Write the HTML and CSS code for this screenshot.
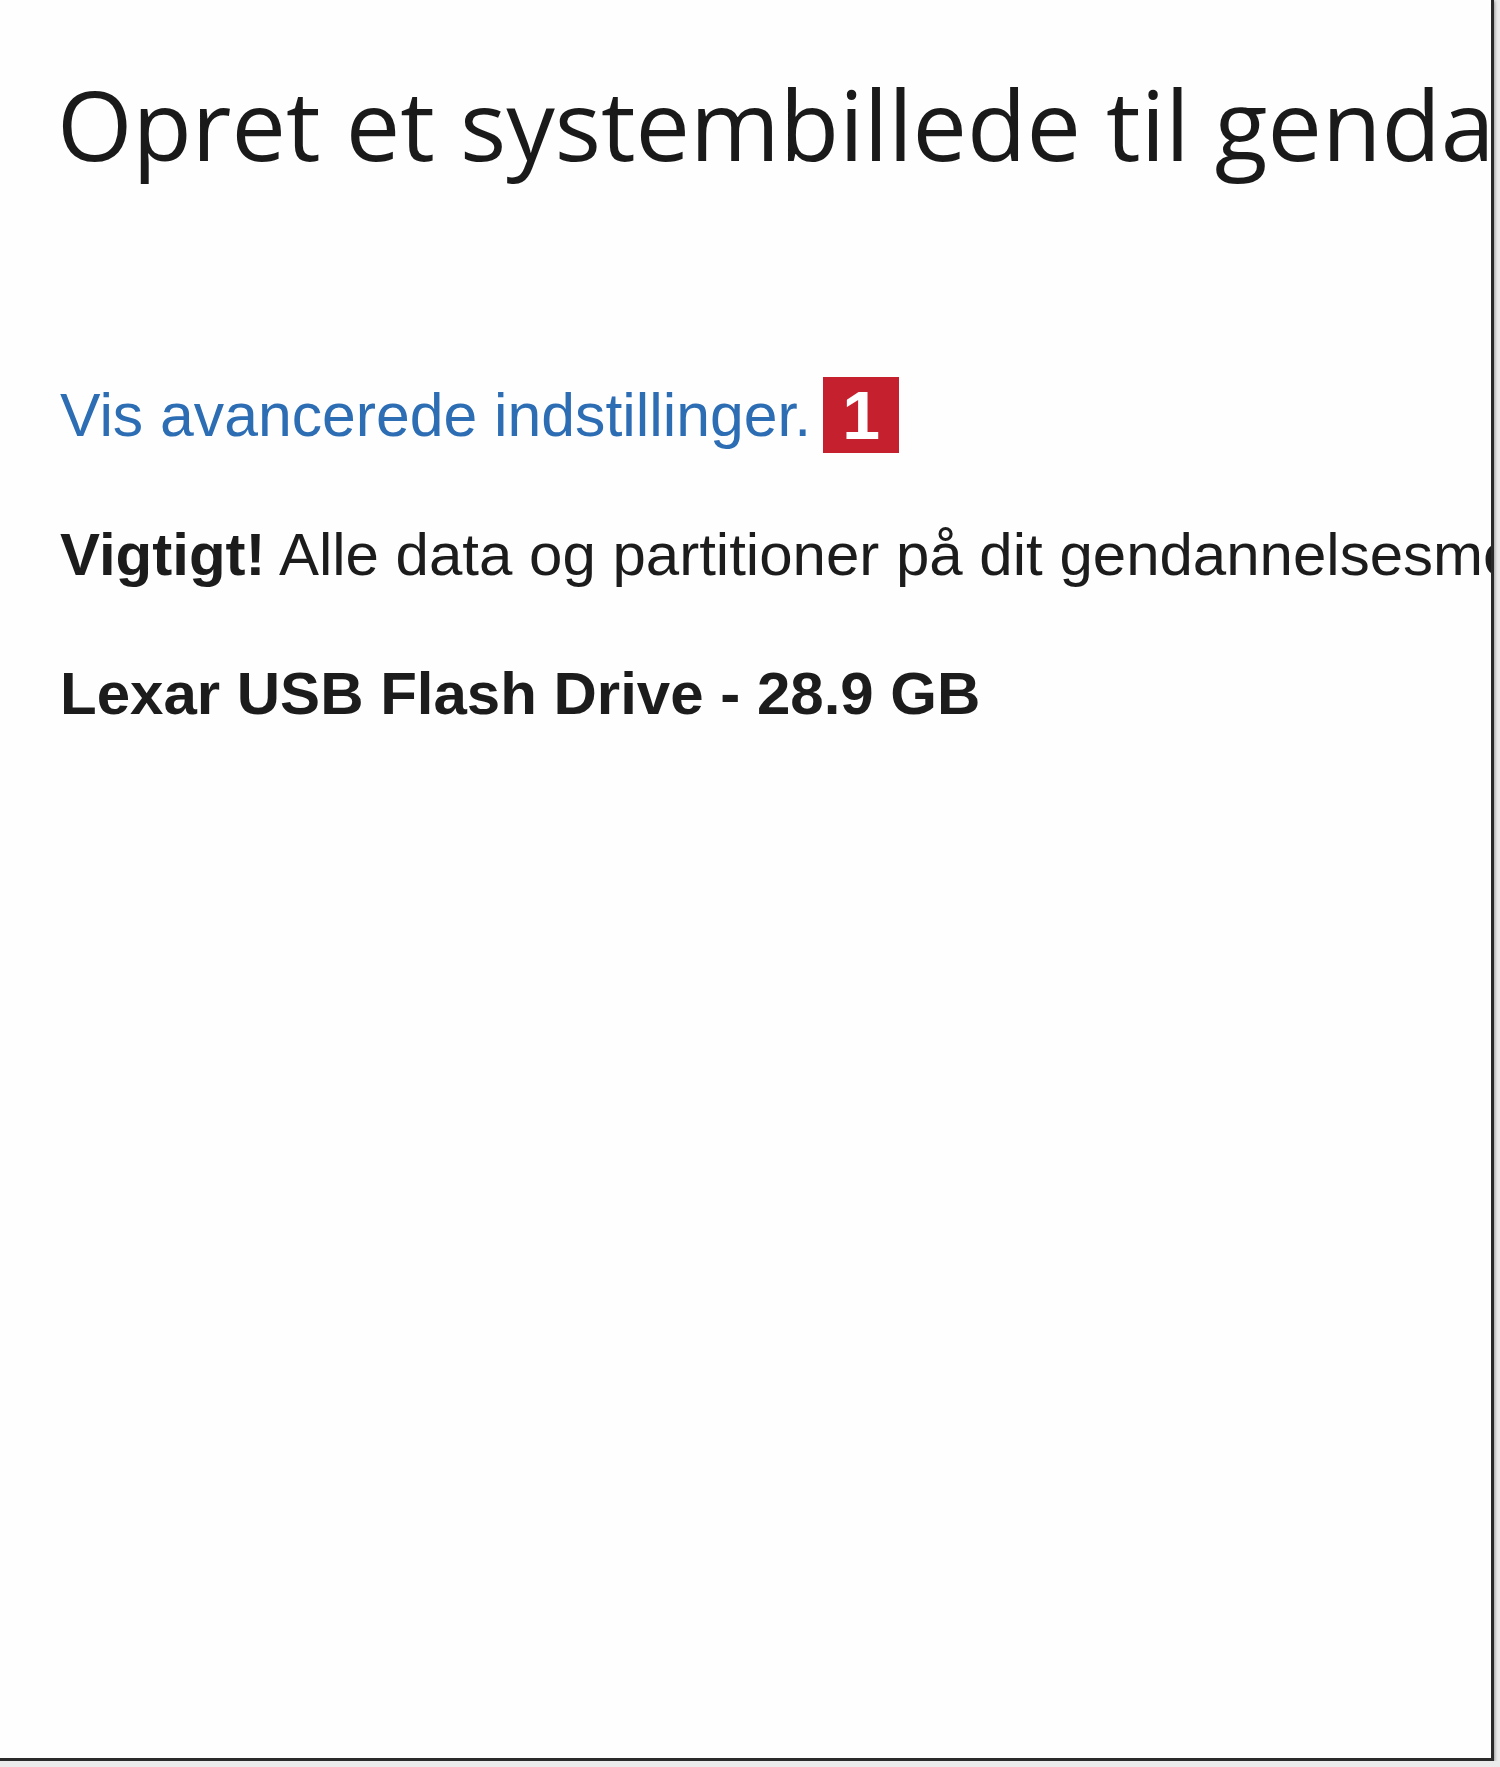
FILE: index.html
```html
<!DOCTYPE html>
<html lang="da">
<head>
<meta charset="UTF-8" />
<meta name="viewport" content="width=device-width, initial-scale=1.0"/>
<title>Opret et systembillede</title>
<link rel="stylesheet" href="styles.css">
</head>
<body>
<div class="wizard">
    <h1 class="title">Opret et systembillede til gendannelsesdrevet</h1>

    <div class="advanced">
        <a href="#" class="link">Vis avancerede indstillinger.</a>
        <span class="badge">1</span>
    </div>

    <p class="warning"><b>Vigtigt!</b> Alle data og partitioner på dit gendannelsesmedie vil blive slettet.</p>

    <p class="drive">Lexar USB Flash Drive - 28.9 GB</p>
</div>
</body>
</html>
```

FILE: styles.css
```css
body {
    margin: 0;
    background: #ebebeb;
    font-family: "Liberation Sans", Arial, sans-serif;
    color: #1c1c1c;
}

.wizard {
    box-sizing: border-box;
    width: 1494px;
    height: 1761px;
    background: #fefefe;
    border-right: 3px solid #2a2a2a;
    border-bottom: 3px solid #2a2a2a;
    box-shadow: 1px 1px 3px rgba(0, 0, 0, 0.35);
    padding: 68px 0 0 60px;
    overflow: hidden;
    white-space: nowrap;
}

.title {
    margin: 0;
    font-family: "Open Sans", "Liberation Sans", sans-serif;
    font-weight: 400;
    font-size: 97px;
    line-height: 110px;
    color: #1a1a1a;
    text-indent: -3px;
}

.advanced {
    display: flex;
    align-items: center;
    gap: 12px;
    height: 76px;
    margin-top: 199px;
}

.link {
    font-size: 60.7px;
    line-height: 72px;
    color: #2c6db4;
    text-decoration: none;
}

.badge {
    width: 76px;
    height: 76px;
    background: #c4202d;
    color: #fff;
    font-weight: 700;
    font-size: 68px;
    line-height: 76px;
    text-align: center;
}

.warning,
.drive {
    margin: 0;
    font-size: 60px;
    line-height: 72px;
}

.warning {
    margin-top: 66px;
}

.drive {
    margin-top: 67px;
    font-weight: 700;
}
```
